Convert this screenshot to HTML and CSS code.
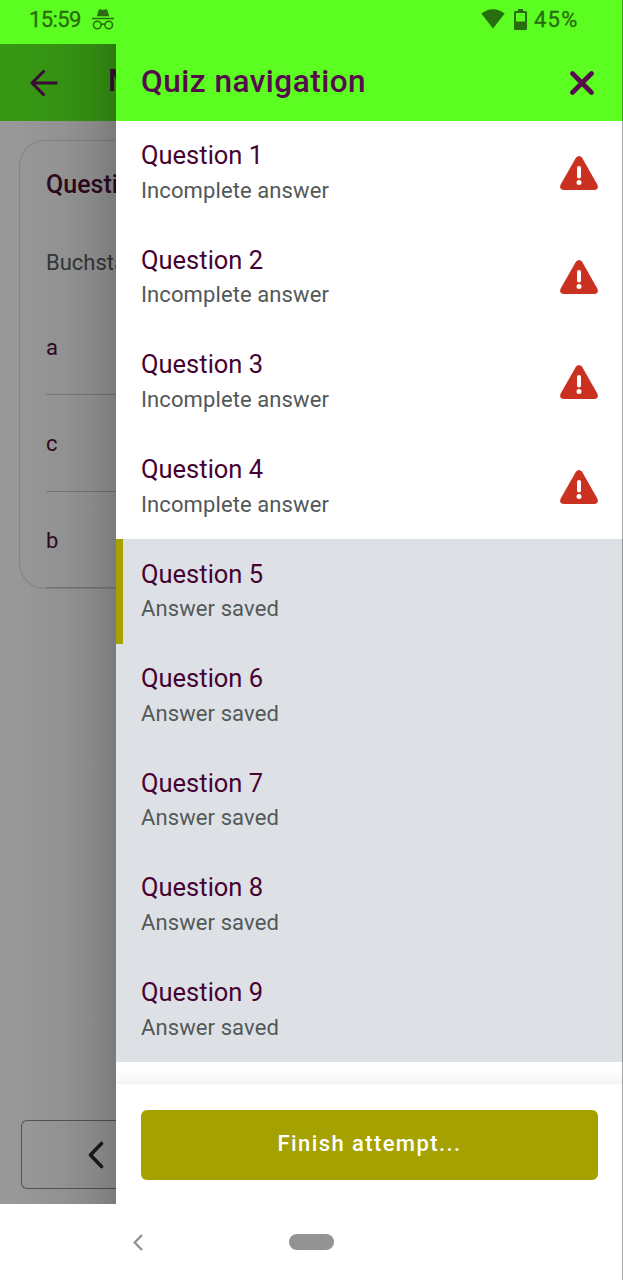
FILE: index.html
```html
<!DOCTYPE html>
<html lang="en">
<head>
<meta charset="utf-8">
<title>Quiz navigation</title>
<link rel="stylesheet" href="styles.css">
</head>
<body>
<div class="phone">
  <header class="status">
    <span class="clock">15:59</span>
    <svg class="incognito" width="22" height="21" viewBox="0 0 22 21">
      <path d="M4.800 7.300 6.700 1q.3-1 1.400-.7l2.900.6 2.900-.6q1.100-.3 1.400.7l1.900 6.300z" fill="currentColor"/>
      <path d="M0 9.500h22" stroke="currentColor" stroke-width="1.500"/>
      <g fill="none" stroke="currentColor" stroke-width="1.500"><circle cx="5.300" cy="16" r="3.800"/><circle cx="16.700" cy="16" r="3.800"/><path d="M9.100 15.500q1.900-1 3.800 0"/></g>
    </svg>
    <svg class="wifi" width="24" height="20" viewBox="0 0 24 20"><path d="M.3 4.600Q12-4 23.700 4.600L12 19.600z" fill="currentColor"/></svg>
    <svg class="battery" width="13" height="21" viewBox="0 0 13 21"><path fill="currentColor" fill-rule="evenodd" d="M4 0h5v2h2.500Q13 2 13 3.500v16q0 1.500-1.500 1.500h-10Q0 21 0 19.500v-16Q0 2 1.500 2H4zM2 4v8.500h9V4z"/></svg>
    <span class="charge">45%</span>
  </header>
  <main class="stage">
    <section class="page">
      <div class="toolbar">
        <svg width="28" height="28" viewBox="0 0 28 28" fill="none" stroke="currentColor" stroke-width="3"><path d="M27.500 14H2M14.500 1.500 2 14l12.500 12.500"/></svg>
        <span class="toolbar-title">M</span>
      </div>
      <div class="card">
        <h2 class="card-title">Questi</h2>
        <p class="prompt">Buchsta</p>
        <div class="option">a</div>
        <div class="option">c</div>
        <div class="option">b</div>
      </div>
      <div class="previous">
        <svg width="16" height="28" viewBox="0 0 16 28" fill="none" stroke="currentColor" stroke-width="3.600" stroke-linecap="round" stroke-linejoin="round"><path d="M13.500 2.500 2.500 14l11 11.500"/></svg>
      </div>
      <div class="shade"></div>
    </section>
    <aside class="drawer">
      <div class="drawer-head">
        <h1 class="drawer-title">Quiz navigation</h1>
        <svg class="close" width="24" height="24" viewBox="0 0 24 24" stroke="currentColor" stroke-width="4.600" stroke-linecap="round"><path d="m2.500 2.500 19 19m0-19-19 19"/></svg>
      </div>
      <ul class="list">
        <li class="row"><div><div class="name">Question 1</div><div class="state">Incomplete answer</div></div><svg class="warn" width="38" height="34" viewBox="0 0 38 34"><path d="M15.900 1.800q3.100-3.600 6.200 0L37.300 28.500q2 4.800-3.100 5.500H3.800q-5.100-.7-3.100-5.500z" fill="currentColor"/><path d="M19 12v8.500" class="mark"/><circle cx="19" cy="26.500" r="2.500" fill="#fff"/></svg></li>
        <li class="row"><div><div class="name">Question 2</div><div class="state">Incomplete answer</div></div><svg class="warn" width="38" height="34" viewBox="0 0 38 34"><path d="M15.900 1.800q3.100-3.600 6.200 0L37.300 28.500q2 4.800-3.100 5.500H3.800q-5.100-.7-3.100-5.500z" fill="currentColor"/><path d="M19 12v8.500" class="mark"/><circle cx="19" cy="26.500" r="2.500" fill="#fff"/></svg></li>
        <li class="row"><div><div class="name">Question 3</div><div class="state">Incomplete answer</div></div><svg class="warn" width="38" height="34" viewBox="0 0 38 34"><path d="M15.900 1.800q3.100-3.600 6.200 0L37.300 28.500q2 4.800-3.100 5.500H3.800q-5.100-.7-3.100-5.500z" fill="currentColor"/><path d="M19 12v8.500" class="mark"/><circle cx="19" cy="26.500" r="2.500" fill="#fff"/></svg></li>
        <li class="row"><div><div class="name">Question 4</div><div class="state">Incomplete answer</div></div><svg class="warn" width="38" height="34" viewBox="0 0 38 34"><path d="M15.900 1.800q3.100-3.600 6.200 0L37.300 28.500q2 4.800-3.100 5.500H3.800q-5.100-.7-3.100-5.500z" fill="currentColor"/><path d="M19 12v8.500" class="mark"/><circle cx="19" cy="26.500" r="2.500" fill="#fff"/></svg></li>
        <li class="row saved current"><div><div class="name">Question 5</div><div class="state">Answer saved</div></div></li>
        <li class="row saved"><div><div class="name">Question 6</div><div class="state">Answer saved</div></div></li>
        <li class="row saved"><div><div class="name">Question 7</div><div class="state">Answer saved</div></div></li>
        <li class="row saved"><div><div class="name">Question 8</div><div class="state">Answer saved</div></div></li>
        <li class="row saved"><div><div class="name">Question 9</div><div class="state">Answer saved</div></div></li>
      </ul>
      <div class="fade"></div>
      <div class="foot"><button class="finish">Finish attempt...</button></div>
    </aside>
  </main>
  <footer class="system">
    <svg class="back" width="10" height="17" viewBox="0 0 10 17" fill="none" stroke="currentColor" stroke-width="2.300"><path d="M9 1 1.700 8.500 9 16"/></svg>
    <span class="pill"></span>
  </footer>
  <div class="edge"></div>
</div>
</body>
</html>
```
FILE: styles.css
```css
* { box-sizing: border-box; }
body { margin: 0; font-family: Roboto, sans-serif; }
h1, h2, p, ul { margin: 0; padding: 0; list-style: none; }
svg { display: block; flex: none; }
.phone { position: relative; width: 623px; height: 1280px; overflow: hidden; display: flex; flex-direction: column; background: #fff; }
.status { flex: none; height: 44px; padding: 0 40px 5px 29px; display: flex; align-items: center; background: #5cfd20; color: #286d0e; font: 400 22px/26px Roboto, sans-serif; }
.clock { width: 63px; letter-spacing: -.6px; -webkit-text-stroke: .3px; }
.wifi { margin-left: 367px; margin-top: -2px; }
.battery { margin-left: 9px; }
.charge { margin-left: 7px; letter-spacing: 1.200px; -webkit-text-stroke: .3px; }
.stage { flex: none; height: 1160px; display: flex; }
.page { position: relative; flex: none; height: 1160px; width: 116px; overflow: hidden; background: #999; display: flex; flex-direction: column; }
.toolbar { flex: none; height: 76.600px; padding-left: 30px; display: flex; align-items: center; background: #379913; color: #3d0a38; gap: 50px; }
.toolbar svg { margin-top: 1px; }
.toolbar-title { font-size: 31px; font-weight: 500; line-height: 40px; margin-top: -2px; }
.card { flex: none; margin: 19px 0 0 19px; height: 449px; border: 1px solid #858585; border-right: 0; border-radius: 26px 0 0 26px; padding: 25px 0 0 26px; color: #300820; }
.card-title { font-size: 25px; line-height: 38px; font-weight: 500; }
.prompt { margin-top: 41px; height: 54px; color: #34383b; font-size: 22px; line-height: 36px; }
.option { height: 96.500px; border-bottom: 1px solid #7a7a7a; font-size: 22px; line-height: 98px; }
.option:last-child { border-bottom-color: #7a7a7a; }
.previous { margin: auto 0 15px 21px; height: 69px; border: 1px solid #555; border-right: 0; border-radius: 6px 0 0 6px; color: #1b1b1b; display: flex; align-items: center; padding-left: 66px; }
.shade { position: absolute; inset: 0; background: linear-gradient(90deg, transparent 10%, rgba(0,0,0,.05) 55%, rgba(0,0,0,.11) 80%, rgba(0,0,0,.2)); }
.drawer { flex: 1; height: 1160px; background: #fff; display: flex; flex-direction: column; }
.drawer-head { flex: none; height: 76.600px; padding: 0 29px 0 25px; display: flex; align-items: center; justify-content: space-between; background: #5cfd20; color: #560b4d; }
.drawer-title { font-size: 31.500px; line-height: 40px; font-weight: 500; margin-top: -1px; letter-spacing: .5px; }
.close { margin-top: 2px; }
.row { height: 104.600px; padding: 0 25px; display: flex; align-items: center; justify-content: space-between; }
.name { font-size: 25.500px; line-height: 36px; margin-top: -1.700px; padding-bottom: 1.700px; color: #460331; }
.state { font-size: 22px; line-height: 32px; letter-spacing: .1px; color: #535859; }
.saved { background: #dde1e6; }
.current { border-left: 7px solid #a5a100; padding-left: 18px; }
.warn { color: #ca3120; }
.mark { stroke: #fff; stroke-width: 4; stroke-linecap: round; }
.fade { flex: none; height: 22px; background: linear-gradient(#fff 25%, #f9f9f9 80%, #f2f2f2); }
.foot { flex: 1; padding: 26px 25px 0; }
.finish { display: block; width: 457px; height: 70px; padding: 0 0 2px; border: 0; border-radius: 6px; background: #a5a100; color: #fff; font: 500 22px/28px Roboto, sans-serif; letter-spacing: 1.400px; }
.system { flex: 1; display: flex; align-items: center; padding-left: 133px; color: #919191; }
.pill { width: 45px; height: 16px; margin-left: 146px; border-radius: 8px; background: #939393; }
.edge { position: absolute; right: 0; top: 0; width: 1px; height: 1280px; background: rgba(0,0,0,.35); }
```
